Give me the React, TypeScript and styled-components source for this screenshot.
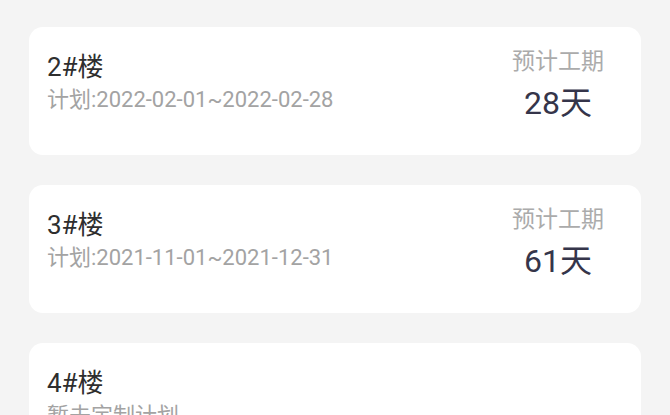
import styled, { createGlobalStyle } from 'styled-components';

interface PlanItem {
  id: number;
  name: string;
  plan?: string;
  days?: number;
}

const items: PlanItem[] = [
  { id: 2, name: '2#楼', plan: '2022-02-01~2022-02-28', days: 28 },
  { id: 3, name: '3#楼', plan: '2021-11-01~2021-12-31', days: 61 },
  { id: 4, name: '4#楼' },
];

function App() {
  return (
    <>
      <GlobalStyle />
      <List>
        {items.map((item) => (
          <Card key={item.id}>
            <Info>
              <Title>{item.name}</Title>
              <Plan>{item.plan ? `计划:${item.plan}` : '暂未定制计划'}</Plan>
            </Info>
            {item.days !== undefined && (
              <Duration>
                <DurationLabel>预计工期</DurationLabel>
                <DurationValue>{item.days}天</DurationValue>
              </Duration>
            )}
          </Card>
        ))}
      </List>
    </>
  );
}

export default App;

const GlobalStyle = createGlobalStyle`
  html, body {
    margin: 0;
    padding: 0;
    background: #f4f4f4;
    font-family: Roboto, "Noto Sans CJK SC", sans-serif;
  }
`;

const List = styled.div`
  display: flex;
  flex-direction: column;
  gap: 30px;
  padding: 27px 0 0 29px;
  width: 641px;
  height: 415px;
  box-sizing: border-box;
  overflow: hidden;
`;

const Card = styled.div`
  flex-shrink: 0;
  display: flex;
  justify-content: space-between;
  align-items: flex-start;
  height: 128px;
  box-sizing: border-box;
  padding: 21px 37px 0 18px;
  background: #ffffff;
  border-radius: 14px;
`;

const Info = styled.div`
  display: flex;
  flex-direction: column;
  padding-top: 3px;
`;

const Title = styled.div`
  font-size: 26px;
  line-height: 32px;
  color: #2e2e2e;
`;

const Plan = styled.div`
  margin-top: 2px;
  font-size: 22px;
  line-height: 30px;
  color: #a3a3a3;
`;

const Duration = styled.div`
  display: flex;
  flex-direction: column;
  align-items: center;
`;

const DurationLabel = styled.div`
  font-size: 23px;
  line-height: 28px;
  color: #ababab;
`;

const DurationValue = styled.div`
  margin-top: 7px;
  font-size: 32px;
  line-height: 40px;
  color: #35354a;
`;
